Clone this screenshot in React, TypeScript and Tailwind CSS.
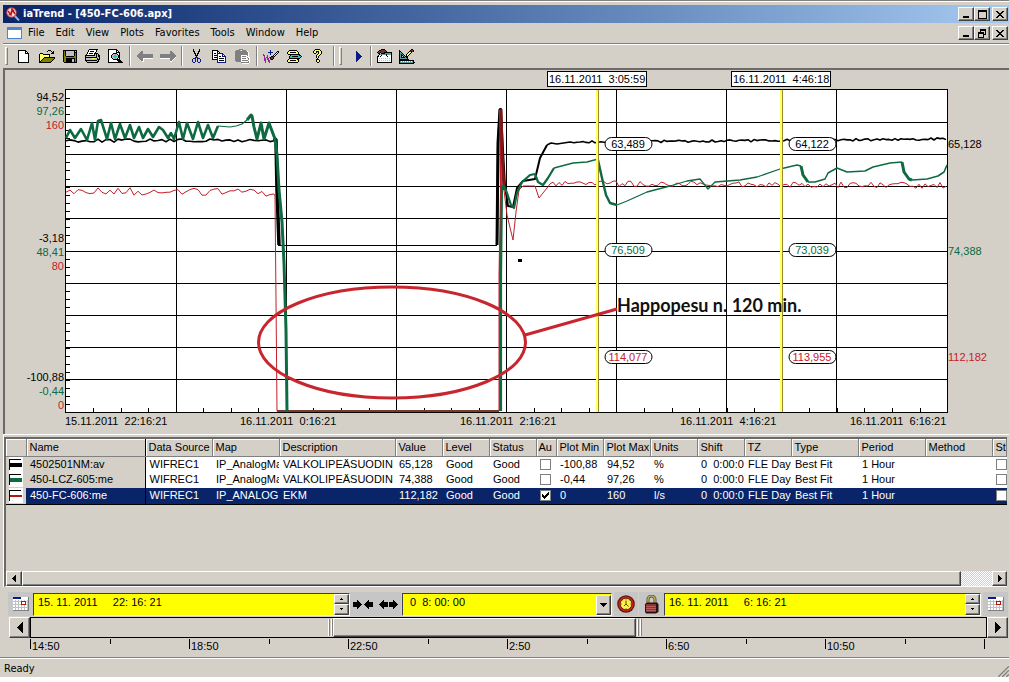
import React from "react";

const UI_FONT = "font-['DejaVu_Sans_Condensed','DejaVu_Sans',sans-serif]";
const RAISED =
  "border border-t-white border-l-white border-r-[#404040] border-b-[#404040] bg-[#d4d0c8] shadow-[inset_-1px_-1px_0_#808080]";

const PALETTE: Record<string, string> = {
  k: "#000000",
  w: "#ffffff",
  g: "#808080",
  l: "#c0c0c0",
  y: "#ffff66",
  o: "#808000",
  b: "#0a1a8c",
  c: "#2bc4c4",
  p: "#a020a0",
  r: "#b01818",
  n: "#0c7c3c",
  d: "#7a3030",
  s: "#5f9ea0",
};

function Pixels({ rows, className = "" }: { rows: string[]; className?: string }) {
  const width = Math.max(...rows.map((r) => r.length));
  const rects: React.ReactElement[] = [];
  rows.forEach((row, y) => {
    let x = 0;
    while (x < row.length) {
      const ch = row[x];
      let end = x + 1;
      while (end < row.length && row[end] === ch) end++;
      if (PALETTE[ch]) {
        rects.push(<rect key={`${x}-${y}`} x={x} y={y} width={end - x} height={1} fill={PALETTE[ch]} />);
      }
      x = end;
    }
  });
  return (
    <svg
      className={`block shrink-0 ${className}`}
      width={width}
      height={rows.length}
      viewBox={`0 0 ${width} ${rows.length}`}
      shapeRendering="crispEdges"
      aria-hidden="true"
    >
      {rects}
    </svg>
  );
}

const ICONS: Record<string, string[]> = {
  New: [
    "kkkkkkkk...",
    "kwwwwwwkk..",
    "kwwwwwwkwk.",
    "kwwwwwwkkkk",
    "kwwwwwwwwwk",
    "kwwwwwwwwwk",
    "kwwwwwwwwwk",
    "kwwwwwwwwwk",
    "kwwwwwwwwwk",
    "kwwwwwwwwwk",
    "kwwwwwwwwwk",
    "kwwwwwwwwwk",
    "kkkkkkkkkkk",
  ],
  Open: [
    ".........kkk....",
    "........k...k.k.",
    ".............kk.",
    ".kkk........kkk.",
    "kywykkkkkkk.....",
    "kwywywywywk.....",
    "kywywywywyk.....",
    "kwywykkkkkkkkkkk",
    "kywykooooooooook",
    "kwykooooooooook.",
    "kykooooooooook..",
    "kkooooooooook...",
    "kkkkkkkkkkkk....",
  ],
  Save: [
    "kkkkkkkkkkkkkk",
    "kokllllllllklk",
    "kokllllllllkkk",
    "kokllllllllkok",
    "kokllllllllkok",
    "kokllllllllkok",
    "kookkkkkkkkook",
    "kooooooooooook",
    "kookkkkkkkkkok",
    "kookkkkkkllkok",
    "kookkkkkkllkok",
    "kookkkkkkllkok",
    ".kkkkkkkkkkkkk",
  ],
  Print: [
    "....kkkkkkkkk..",
    "...kwwwwwwwk...",
    "...kwkkkkwwk...",
    "..kwwwwwwwk....",
    "..kwkkkkwkkkk..",
    ".kwwwwwwwklklk.",
    "kkkkkkkkkklklkk",
    "kllllllllllklkk",
    "kkkkkkkkkkkkllk",
    "kllllllyyyllklk",
    "klllllllllllkkk",
    "kkkkkkkkkkkklk.",
    ".kllllllllllkk.",
    "..kkkkkkkkkkk..",
  ],
  Preview: [
    "kkkkkkkkk......",
    "kwwwwwwwkk.....",
    "kwwwwwwwkwk....",
    "kwwwwwwwkkkk...",
    "kwwwwkkkkwwk...",
    "kwwwkllclkwk...",
    "kwwkllccllkk...",
    "kwwklcccclkk...",
    "kwwkllccllkk...",
    "kwwwkllclkwk...",
    "kwwwwkkkkkkk...",
    "kwwwwwwwwkkkk..",
    "kwwwwwwwwwkkkk.",
    "kkkkkkkkkkkkkkk",
  ],
  Back: [
    "....gg..........",
    "...ggg..........",
    "..gggg..........",
    ".ggggggggggggggg",
    "gggggggggggggggg",
    "gggggggggggggggg",
    ".ggggggggggggggg",
    "..ggggwwwwwwwwww",
    "...gggw.........",
    "....ggw.........",
    ".....ww.........",
  ],
  Forward: [
    "..........gg....",
    "..........ggg...",
    "..........gggg..",
    "ggggggggggggggg.",
    "gggggggggggggggg",
    "gggggggggggggggg",
    "gggggggggggggggw",
    "wwwwwwwwwwggggw.",
    "..........gggw..",
    "..........ggw...",
    "..........ww....",
  ],
  Cut: [
    "..k.....k..",
    "..k.....k..",
    "..kk...kk..",
    "...k...k...",
    "...kk.kk...",
    "....k.k....",
    "....kkk....",
    ".....k.....",
    "....bbb....",
    "..bbb.bbb..",
    ".b..b.b..b.",
    ".b..b.b..b.",
    ".b..b.b..b.",
    "..bb...bb..",
  ],
  Copy: [
    "kkkkkk.........",
    "kwwwwkk........",
    "kwwwwkwk.......",
    "kwkkwbbbbbb....",
    "kwwwwbwwwwbb...",
    "kwkkkbwwwwbwb..",
    "kwwwwbwkkwbbbb.",
    "kwkkkbwwwwwwwb.",
    "kwwwwbwkkkkkwb.",
    "kkkkkbwwwwwwwb.",
    ".....bwkkkkkwb.",
    ".....bwwwwwwwb.",
    ".....bbbbbbbbb.",
  ],
  Paste: [
    "....gggg.......",
    ".gggglwgggg....",
    "ggggggggggggw..",
    "gggggggggggggw.",
    "gggggggggggggw.",
    "gggggggggggggw.",
    "ggggggwwwwwwgw.",
    "ggggggwggggwww.",
    "ggggggwwwwwwgww",
    "ggggggwggggwwgw",
    "ggggggwwwwwwwgw",
    "ggggggwggggggww",
    ".gggggwwwwwwwgw",
    "......ggggggggw",
    ".......wwwwwww.",
  ],
  "Add trace": [
    ".......b.........",
    ".......b......kk.",
    ".....bbbbb...kyk.",
    ".......b....kyk..",
    "p......b...kyk...",
    "pp..p.....kyk....",
    ".p..p...kkdk.....",
    ".p.pp.pkddk......",
    ".pp.pp.kddk......",
    ".pp.pp.pkk.......",
    ".pp..pp..........",
    "..p..pp..........",
    "..p...p..........",
  ],
  "Data source": [
    "..kkkkkkkk.....",
    ".kyyyyyyyyk....",
    "kyykkkkkkyyk...",
    "kyyyyyyyyyyk...",
    ".kkkkkkkkkkkk..",
    "...kcccccccckk.",
    "..kcckkkkkkccck",
    "..kcccccccccck.",
    "..kkkkkkkkkkk..",
    ".kyyyyyyyykk...",
    "kyykkkkkkyyk...",
    "kyyyyyyyyyyk...",
    ".kkkkkkkkkk....",
  ],
  Help: [
    "..kkkkk..",
    ".kyyyyyk.",
    "kyykkkyyk",
    "kyyk.kyyk",
    ".kk..kyyk",
    "....kyyk.",
    "...kyyk..",
    "...kyk...",
    "...kyk...",
    "....k....",
    "...kkk...",
    "...kyyk..",
    "...kyyk..",
    "....kk...",
  ],
  Play: ["b.....", "bb....", "bbb...", "bbbb..", "bbbbb.", "bbbbbb", "bbbbb.", "bbbb..", "bbb...", "bb....", "b....."],
  Properties: [
    ".....kkkk.......",
    "...kkddddk......",
    "..kdddddddk.....",
    ".kddkdddkkkkkkkk",
    "..kk.kkkkssssssk",
    "...ksssssskssssk",
    "..kwwkwwwwkwwwwk",
    ".kkwkwwwwwwkwwwk",
    ".kwwwwwwwwwwwwwk",
    ".kwlwlwlwlwlwlwk",
    ".kwwwwwwwwwwwwwk",
    ".kwlwlwlwlwlwlwk",
    ".kwwwwwwwwwwwwwk",
    ".kkkkkkkkkkkkkkk",
  ],
  Design: [
    "............kk..",
    "k..........kddk.",
    "kk........kdkdk.",
    "ksk......kyyk...",
    "kssk....kyyk....",
    "ksksk..kyyk.....",
    "kskksk.kyk......",
    "ksk.kskkk.......",
    "kskkkkskk.......",
    "ksssssssk.......",
    "kkkkkkkkkk......",
    "kkkkkkkkkkkkkkk.",
    "kswswswswswswsk.",
    "kssssssssssssskk",
    "kkkkkkkkkkkkkkk.",
  ],
};

const CALENDAR = [
  "bbbbbbbbwwwwwwwg",
  "bbbbbbbbwwwwwwwg",
  "wwwwwwwwwwwwwwwg",
  "wwlwwlwwlwwlwwlg",
  "llllllllrrrrrllg",
  "wwlwwlwwrwwwrwlg",
  "wwlwwlwwrwwwrwlg",
  "llllllllrrrrrllg",
  "wwlwwlwwlwwlwwlg",
  "wwlwwlwwlwwlwwlg",
  "lllllllllllllllg",
  "wwlwwlwwlwwlwwlg",
  "wwlwwlwwlwwlwwlg",
  "gggggggggggggggg",
];

const ARROW_R = ["....k....", "....kk...", "kkkkkkk..", "kkkkkkkk.", "kkkkkkkkk", "kkkkkkkk.", "kkkkkkk..", "....kk...", "....k...."];
const ARROW_L = ARROW_R.map((r) => r.split("").reverse().join(""));
const TRI_L = ["...k", "..kk", ".kkk", "kkkk", ".kkk", "..kk", "...k"];
const TRI_R = ["k...", "kk..", "kkk.", "kkkk", "kkk.", "kk..", "k..."];
const BIG_L = [".....k", "....kk", "...kkk", "..kkkk", ".kkkkk", "kkkkkk", ".kkkkk", "..kkkk", "...kkk", "....kk", ".....k"];
const BIG_R = BIG_L.map((r) => r.split("").reverse().join(""));
const TRI_D = ["kkkkkkk", ".kkkkk.", "..kkk..", "...k..."];
const UP_S = [".k.", "kkk"];
const DOWN_S = ["kkk", ".k."];
const MINIMIZE = ["......", "......", "......", "......", "......", "......", "kkkkkk", "kkkkkk"];
const MAXIMIZE = ["kkkkkkkkk", "kkkkkkkkk", "k.......k", "k.......k", "k.......k", "k.......k", "k.......k", "k.......k", "kkkkkkkkk"];
const RESTORE = ["..kkkkkk", "..kkkkkk", "..k....k", "kkkkkk.k", "kkkkkk.k", "k....kkk", "k....k..", "k....k..", "kkkkkk.."];
const CLOSE = ["kk....kk", ".kk..kk.", "..kkkk..", "...kk...", "..kkkk..", ".kk..kk.", "kk....kk"];
const CHECK = ["......k", ".....kk", "k...kkk", "kk.kkk.", "kkkkk..", ".kkk...", "..k...."];

function Sep({ className = "mx-[2px]" }: { className?: string }) {
  return <span className={`h-[20px] w-[2px] border-l border-r border-l-[#808080] border-r-white ${className}`} />;
}

function Grip() {
  return <span className="mx-[2px] h-[18px] w-[3px] border border-t-white border-l-white border-r-[#808080] border-b-[#808080]" />;
}

function Tool({ name }: { name: string }) {
  return (
    <button type="button" aria-label={name} className="flex h-[23px] w-[23px] items-center justify-center">
      <Pixels rows={ICONS[name]} />
    </button>
  );
}

function WindowButtons({ middle }: { middle: "Maximize" | "Restore" }) {
  const base = `flex h-[14px] w-[16px] items-center justify-center ${RAISED}`;
  return (
    <div className="ml-auto flex items-center pr-[1px]">
      <button type="button" aria-label="Minimize" className={base}>
        <Pixels rows={MINIMIZE} />
      </button>
      <button type="button" aria-label={middle} className={base}>
        <Pixels rows={middle === "Maximize" ? MAXIMIZE : RESTORE} />
      </button>
      <button type="button" aria-label="Close" className={`ml-[2px] ${base}`}>
        <Pixels rows={CLOSE} />
      </button>
    </div>
  );
}

/* ---------- Trend chart ---------- */

type Point = [number, number];

function noise(from: number, to: number, base: number, end: number, amp: number, step: number, seed: number): Point[] {
  const pts: Point[] = [];
  let s = seed;
  for (let x = from; x <= to; x += step) {
    s = (s * 1103515245 + 12345) % 2147483648;
    const t = (x - from) / (to - from);
    pts.push([x, Math.round((base + (end - base) * t + (s / 2147483648 - 0.5) * 2 * amp) * 10) / 10]);
  }
  return pts;
}

const path = (pts: Point[]) => pts.map((p) => p.join(",")).join(" ");

const BLACK_LEFT = noise(66, 274, 140.5, 140.5, 1.6, 4, 7);
const BLACK_RIGHT: Point[] = [[547, 145], [551, 143], [557, 144], [570, 142], ...noise(574, 947, 142, 139, 1.2, 3, 21)];
const GREEN_WAVE: Point[] = [
  [66, 138], [70, 130], [75, 138], [81, 129], [87, 140], [92, 123], [95, 140], [98, 121], [101, 120], [107, 139],
  [111, 123], [115, 139], [120, 124], [125, 138], [130, 125], [134, 138], [139, 127], [143, 138], [148, 129],
  [153, 137], [159, 127], [163, 130], [168, 138], [171, 133], [174, 139], [179, 122], [183, 139], [187, 123],
  [193, 139], [198, 122], [203, 138], [208, 125], [213, 138], [218, 126],
];
const GREEN_THIN: Point[] = [[218, 126], [230, 127], [236, 126], [242, 124], [247, 120]];
const GREEN_FALL: Point[] = [
  [247, 120], [251, 115], [252, 116], [254, 127], [257, 139], [261, 123], [264, 139], [269, 123], [275, 139],
  [277, 155], [279, 190], [282, 222], [284, 263], [286, 330], [287, 411],
];
const RED_LEFT = noise(66, 272, 191, 193, 4, 4, 11);
const RED_RIGHT = noise(550, 947, 183.5, 185.5, 3, 3, 5);

function Pill({ x, y, color, children }: { x: number; y: number; color: string; children: string }) {
  return (
    <g>
      <rect x={x} y={y - 6.5} width={47} height={13} rx={6.5} fill="#fff" stroke="#000" />
      <text x={x + 23} y={y + 4} fill={color} textAnchor="middle">
        {children}
      </text>
    </g>
  );
}

const GREEN = "#0d6a41";
const RED = "#c4202a";
const AXIS: [number, string, string][] = [
  [101, "94,52", "#000"], [115, "97,26", GREEN], [129, "160", RED],
  [242, "-3,18", "#000"], [256, "48,41", GREEN], [270, "80", RED],
  [381, "-100,88", "#000"], [395, "-0,44", GREEN], [409, "0", RED],
];

function TrendChart() {
  const hs = [122, 154, 186, 218, 251, 283, 315, 347, 379];
  const vs = [176, 286, 396, 506, 616, 726, 836];
  return (
    <svg viewBox="6 70 1003 364" className="block h-auto w-full font-['Liberation_Sans',Arial,sans-serif] text-[11px]" role="img" aria-label="Trend chart">
      <rect x="65" y="89" width="882" height="323" fill="#fff" />
      <g stroke="#000" shapeRendering="crispEdges">
        {hs.map((y) => <line key={y} x1={65} x2={947} y1={y + 0.5} y2={y + 0.5} />)}
        {vs.map((x) => <line key={x} x1={x + 0.5} x2={x + 0.5} y1={89} y2={412} />)}
        {Array.from({ length: 39 }, (_, i) => 98 + Math.round(i * 8.05)).map((y) => (
          <line key={y} x1={65} x2={70} y1={y + 0.5} y2={y + 0.5} />
        ))}
        {Array.from({ length: 31 }, (_, i) => 93 + Math.round(i * 27.55)).map((x) => (
          <line key={x} x1={x + 0.5} x2={x + 0.5} y1={408} y2={412} />
        ))}
        <rect x="65.5" y="89.5" width="882" height="323" fill="none" />
      </g>

      <g fill="none" stroke="#000" strokeLinejoin="round">
        <polyline points={path(BLACK_LEFT)} strokeWidth="1.6" />
        <polyline points="274,138 276,140 277,190 279,245" strokeWidth="3.5" />
        <polyline points="278,245.5 497,245.5" />
        <polyline points="497,245 498,143 500,109 501,109 503,150 505,186 508,206 513,207 517,188 523,181 535,179 540,158 547,145" strokeWidth="2" />
        <polyline points="497,245 498,143 500,109" strokeWidth="3" />
        <polyline points={path(BLACK_RIGHT)} strokeWidth="1.6" />
      </g>
      <g fill="none" stroke={RED} strokeWidth="1">
        <polyline points={path([...RED_LEFT, [274, 194], [275, 196], [276, 300], [277, 411]])} />
        <polyline points="499.5,411 499.5,275 501,190 500,110" strokeWidth="2" />
        <polyline points="501,109 502,150 504,190" stroke="#801818" strokeWidth="3" />
        <polyline points={path([[504, 190], [507, 215], [513, 240], [516, 212], [519, 190], [523, 186], [535, 186], [539, 198], [547, 188], ...RED_RIGHT])} />
        <polyline points="277,411 499,411" stroke="#7a3a2c" strokeWidth="2" />
      </g>
      <g fill="none" stroke={GREEN} strokeLinejoin="round">
        <polyline points={path(GREEN_WAVE)} strokeWidth="2.6" />
        <polyline points={path(GREEN_THIN)} strokeWidth="1.2" />
        <polyline points={path(GREEN_FALL)} strokeWidth="3" />
        <polyline points="501,411 501,275 502,186 504,186 507,193 511,205 514,208 517,193 522,182 530,175 535,174" strokeWidth="2.2" />
        <polyline points="535,174 538,182 543,185 548,178 554,168" strokeWidth="2.2" />
        <polyline points="554,168 573,163 587,162 598,159" strokeWidth="1.3" />
        <polyline points="598,160 602,178 606,195 610,203 617,205" strokeWidth="2.4" />
        <polyline points="617,205 627,201 647,192 670,186 687,181 700,179 708,189 715,182 740,180 757,177 780,169 797,165 801,166" strokeWidth="1.3" />
        <polyline points="801,166 803,175 808,182" strokeWidth="3" />
        <polyline points="808,182 815,182 825,179 828,173 837,168 847,172 865,171 873,167 890,163 902,162" strokeWidth="1.5" />
        <polyline points="902,162 904,172 909,179 912,180" strokeWidth="3" />
        <polyline points="912,180 927,179 938,176 944,172 947,165" strokeWidth="1.6" />
      </g>
      <rect x="518" y="259" width="4" height="3" />

      {[596, 780].map((x) => (
        <g key={x} shapeRendering="crispEdges">
          <rect x={x} y="90" width="2" height="322" fill="#ffff66" />
          <rect x={x + 2} y="90" width="1" height="322" fill="#9a8a30" />
        </g>
      ))}
      <g fill="#fff" stroke="#000" shapeRendering="crispEdges">
        <rect x="547.5" y="71.5" width="99" height="15" />
        <rect x="731.5" y="71.5" width="99" height="15" />
      </g>
      <g className="whitespace-pre">
        <text x="549" y="83">16.11.2011{"\u00a0\u00a0"}3:05:59</text>
        <text x="733" y="83">16.11.2011{"\u00a0\u00a0"}4:46:18</text>
        <text x="65" y="425">15.11.2011{"\u00a0\u00a0"}22:16:21</text>
        <text x="240" y="425">16.11.2011{"\u00a0\u00a0"}0:16:21</text>
        <text x="460" y="425">16.11.2011{"\u00a0\u00a0"}2:16:21</text>
        <text x="680" y="425">16.11.2011{"\u00a0\u00a0"}4:16:21</text>
        <text x="850" y="425">16.11.2011{"\u00a0\u00a0"}6:16:21</text>
      </g>
      {AXIS.map(([y, label, color]) => (
        <text key={y} x={64} y={y} fill={color} textAnchor="end">{label}</text>
      ))}
      <text x="948" y="148">65,128</text>
      <text x="948" y="255" fill={GREEN}>74,388</text>
      <text x="948" y="361" fill={RED}>112,182</text>

      <Pill x={605} y={144} color="#000">63,489</Pill>
      <Pill x={605} y={250} color={GREEN}>76,509</Pill>
      <Pill x={605} y={357} color={RED}>114,077</Pill>
      <Pill x={789} y={144} color="#000">64,122</Pill>
      <Pill x={789} y={250} color={GREEN}>73,039</Pill>
      <Pill x={789} y={357} color={RED}>113,955</Pill>

      <ellipse cx="392" cy="342.5" rx="133.5" ry="55.5" fill="none" stroke="#c8262e" strokeWidth="3" />
      <line x1="525" y1="335" x2="617" y2="309" stroke="#c8262e" strokeWidth="3" />
      <text x="617" y="312" className="font-['Lato','Open_Sans',sans-serif] text-[18px] font-bold" fill="#111">
        Happopesu n. 120 min.
      </text>
    </svg>
  );
}

/* ---------- Trace table ---------- */

const COLUMNS: [string, string][] = [
  ["", "w-[20px]"],
  ["Name", "w-[119px]"],
  ["Data Source", "w-[67px]"],
  ["Map", "w-[67px]"],
  ["Description", "w-[116px]"],
  ["Value", "w-[47px]"],
  ["Level", "w-[47px]"],
  ["Status", "w-[47px]"],
  ["Au", "w-[20px]"],
  ["Plot Min", "w-[47px]"],
  ["Plot Max", "w-[47px]"],
  ["Units", "w-[47px]"],
  ["Shift", "w-[47px]"],
  ["TZ", "w-[47px]"],
  ["Type", "w-[67px]"],
  ["Period", "w-[67px]"],
  ["Method", "w-[67px]"],
  ["St", ""],
];

const TRACES = [
  { color: "#000000", thick: 4, name: "4502501NM:av", map: "IP_AnalogMap", desc: "VALKOLIPEÄSUODIN", value: "65,128", auto: false, min: "-100,88", max: "94,52", units: "%" },
  { color: GREEN, thick: 4, name: "450-LCZ-605:me", map: "IP_AnalogMap", desc: "VALKOLIPEÄSUODIN", value: "74,388", auto: false, min: "-0,44", max: "97,26", units: "%" },
  { color: "#b01818", thick: 2, name: "450-FC-606:me", map: "IP_ANALOG", desc: "EKM", value: "112,182", auto: true, min: "0", max: "160", units: "l/s" },
];

function GridCheck({ label, checked = false }: { label: string; checked?: boolean }) {
  return (
    <span className="relative block h-[11px] w-[11px]">
      <input
        type="checkbox"
        aria-label={label}
        defaultChecked={checked}
        className="block h-[11px] w-[11px] appearance-none border border-[#808080] bg-white"
      />
      {checked && <Pixels rows={CHECK} className="pointer-events-none absolute top-[2px] left-[2px]" />}
    </span>
  );
}

function TraceTable() {
  return (
    <table className="w-full table-fixed border-collapse text-left text-[11px] leading-[15px] whitespace-nowrap">
      <colgroup>
        {COLUMNS.map(([name, width], i) => (
          <col key={name + i} className={width} />
        ))}
      </colgroup>
      <thead>
        <tr className="h-[17px]">
          {COLUMNS.map(([name], i) => (
            <th
              key={name + i}
              scope="col"
              className={`overflow-hidden border-r border-b border-b-[#808080] bg-[#d4d0c8] p-0 pt-px font-normal shadow-[inset_1px_1px_0_#fff] ${
                i === 1 ? "border-r-black" : "border-r-[#808080]"
              } ${i === 8 ? "pl-[2px]" : "pl-[3px]"}`}
            >
              {name}
            </th>
          ))}
        </tr>
      </thead>
      <tbody>
        {TRACES.map((t) => {
          const selected = t.auto;
          const cell = "overflow-hidden p-0 pl-[4px] align-top";
          return (
            <tr key={t.name} className={`h-[16px] ${selected ? "bg-[#0a246a] text-white" : "bg-white text-black"}`}>
              <td className="bg-[#d4d0c8] p-0 pl-[3px] align-top">
                <svg width="14" height="15" viewBox="0 0 14 15" className="block" shapeRendering="crispEdges" aria-hidden="true">
                  <rect width="14" height="15" fill="#fff" />
                  <path d="M0 2h12v1H1v10H0z" fill="#000" />
                  <rect x="1" y={t.thick === 4 ? 6 : 7} width="12" height={t.thick} fill={t.color} />
                </svg>
              </td>
              <td className={`${cell} border-r border-r-black ${selected ? "" : "bg-[#d4d0c8]"}`}>{t.name}</td>
              <td className={cell}>WIFREC1</td>
              <td className={cell}>{t.map}</td>
              <td className={cell}>{t.desc}</td>
              <td className={cell}>{t.value}</td>
              <td className={cell}>Good</td>
              <td className={cell}>Good</td>
              <td className={`${cell} pt-[2px]`}><GridCheck label={`Autoscale ${t.name}`} checked={t.auto} /></td>
              <td className={cell}>{t.min}</td>
              <td className={cell}>{t.max}</td>
              <td className={cell}>{t.units}</td>
              <td className={cell}>0{"\u00a0\u00a0"}0:00:00</td>
              <td className={cell}>FLE Day</td>
              <td className={cell}>Best Fit</td>
              <td className={cell}>1 Hour</td>
              <td className={cell} />
              <td className={`${cell} pt-[2px]`}><GridCheck label={`Stepped ${t.name}`} /></td>
            </tr>
          );
        })}
      </tbody>
    </table>
  );
}

/* ---------- Time controls ---------- */

const FIELD = "border border-t-[#404040] border-l-[#404040] border-r-white border-b-white bg-[#ffff00]";

function TimeField({ label, value }: { label: string; value: string }) {
  return (
    <div className={`flex h-[23px] min-w-0 flex-1 ${FIELD}`}>
      <input
        aria-label={label}
        defaultValue={value}
        className="min-w-0 flex-1 bg-transparent px-[4px] pb-[4px] text-[11px] leading-[16px] outline-none"
      />
      <div className="flex w-[15px] flex-col bg-[#d4d0c8]">
        <button type="button" aria-label={`${label} up`} className={`flex flex-1 items-center justify-center ${RAISED}`}>
          <Pixels rows={UP_S} />
        </button>
        <button type="button" aria-label={`${label} down`} className={`flex flex-1 items-center justify-center ${RAISED}`}>
          <Pixels rows={DOWN_S} />
        </button>
      </div>
    </div>
  );
}

const FLAT = "flex h-[24px] shrink-0 items-center justify-center bg-[#c6c6c6]";

function TimeControls() {
  return (
    <div className="flex items-center pr-[1px] pl-[8px]">
      <button type="button" aria-label="Start calendar" className={`${FLAT} w-[25px]`}>
        <Pixels rows={CALENDAR} />
      </button>
      <TimeField label="Start time" value="15. 11. 2011     22: 16: 21" />
      <button type="button" aria-label="Shrink range" className={`${FLAT} w-[26px] gap-[2px]`}>
        <Pixels rows={ARROW_R} />
        <Pixels rows={ARROW_L} />
      </button>
      <button type="button" aria-label="Expand range" className={`${FLAT} mr-[1px] w-[25px] gap-[1px]`}>
        <Pixels rows={ARROW_L} />
        <Pixels rows={ARROW_R} />
      </button>
      <div className={`relative h-[23px] w-[210px] shrink-0 ${FIELD}`}>
        <select
          aria-label="Time span"
          className="block h-full w-full appearance-none bg-transparent pb-[4px] pl-[7px] text-[11px] leading-[16px] outline-none"
        >
          <option>0{"\u00a0\u00a0"}8: 00: 00</option>
        </select>
        <span className={`pointer-events-none absolute top-[1px] right-0 flex h-[20px] w-[15px] items-center justify-center ${RAISED}`}>
          <Pixels rows={TRI_D} />
        </span>
      </div>
      <button type="button" aria-label="Now" className={`${FLAT} ml-[2px] w-[24px]`}>
        <svg width="18" height="18" viewBox="0 0 18 18" aria-hidden="true">
          <circle cx="9" cy="9" r="8.8" fill="#6b1010" />
          <circle cx="9" cy="9" r="7.6" fill="#c02a1a" />
          <circle cx="9" cy="9" r="5.8" fill="#fff04a" stroke="#5a1010" strokeWidth="0.8" />
          <path d="M9 5.500v3.500M9 9l2.500 2.500M9 9l-2 2" stroke="#4a3a00" strokeWidth="0.900" fill="none" />
          <path d="M9 4v1M9 13v1M4 9h1M13 9h1M5.500 5.500l.7.7M12.500 5.500l-.7.7" stroke="#7a6a00" strokeWidth="0.800" />
        </svg>
      </button>
      <button type="button" aria-label="Lock" className={`${FLAT} ml-[1px] w-[25px]`}>
        <svg width="15" height="19" viewBox="0 0 15 19" aria-hidden="true">
          <path d="M4 9V4.500a3.500 3.500 0 0 1 7 0V9" fill="none" stroke="#5a5a20" strokeWidth="3" />
          <path d="M4 9V4.500a3.500 3.500 0 0 1 7 0V9" fill="none" stroke="#c0b870" strokeWidth="1.200" />
          <path d="M1 9l2-1.500h10L14.500 9v8L12 18.500H2L1 17z" fill="#2a1010" />
          <path d="M2 9h10v8H2z" fill="#8a3434" />
          <path d="M2 11.500h10M2 13.500h10M2 15.500h10" stroke="#c87070" strokeWidth="0.700" />
        </svg>
      </button>
      <TimeField label="End time" value="16. 11. 2011     6: 16: 21" />
      <button type="button" aria-label="End calendar" className={`${FLAT} ml-[2px] w-[25px]`}>
        <Pixels rows={CALENDAR} />
      </button>
    </div>
  );
}

function Handle() {
  return (
    <span className="flex w-[6px] shrink-0 justify-center gap-[1px] bg-[#d4d0c8] py-[1px]">
      <span className="w-[2px] border-l border-white bg-[#808080]" />
      <span className="w-[2px] border-l border-white bg-[#808080]" />
    </span>
  );
}

const RULER = ["14:50", "", "18:50", "", "22:50", "", "2:50", "", "6:50", "", "10:50", ""];

export default function App() {
  return (
    <div className="bg-white">
      <div className="border-t border-[#808080] bg-[#d4d0c8] font-['Liberation_Sans',Arial,sans-serif] text-[11px] text-black">
        <div className="h-[4px] border-t border-white" />
        <div className="pl-[3px]">
          <header className={`flex h-[18px] items-center bg-gradient-to-r from-[#0a246a] to-[#a6caf0] pl-[3px] ${UI_FONT}`}>
            <svg width="14" height="14" viewBox="0 0 14 14" aria-hidden="true">
              <path d="M8 8l5 5.500" stroke="#8ab4e8" strokeWidth="2" />
              <circle cx="5.500" cy="5.500" r="4.800" fill="#f4dcdc" stroke="#c03030" strokeWidth="1" />
              <path d="M2 4l3 4 1-6 3 5M3 8l5-5" stroke="#c01818" strokeWidth="1.500" fill="none" />
            </svg>
            <h1 className="pl-[3px] text-[11px] leading-[16px] font-bold text-white">iaTrend - [450-FC-606.apx]</h1>
            <WindowButtons middle="Maximize" />
          </header>

          <nav className={`flex h-[20px] items-center pl-[4px] ${UI_FONT}`}>
            <svg width="15" height="12" viewBox="0 0 15 12" shapeRendering="crispEdges" aria-hidden="true">
              <rect width="15" height="12" fill="#4a86c8" />
              <rect x="1" y="3" width="13" height="8" fill="#fff" />
            </svg>
            {["File", "Edit", "View", "Plots", "Favorites", "Tools", "Window", "Help"].map((item) => (
              <button key={item} type="button" className="pr-[5px] pl-[6px] text-[11px] leading-[16px]">
                {item}
              </button>
            ))}
            <WindowButtons middle="Restore" />
          </nav>

          <div className="flex h-[25px] items-center border-t border-[#808080] shadow-[inset_0_1px_0_#fff]">
            <Grip />
            <div className="flex items-center pl-[2px]">
              {["New", "Open", "Save", "Print", "Preview"].map((n) => <Tool key={n} name={n} />)}
              <Sep />
              <Tool name="Back" />
              <Tool name="Forward" />
              <Sep />
              {["Cut", "Copy", "Paste"].map((n) => <Tool key={n} name={n} />)}
              <Sep />
              {["Add trace", "Data source", "Help"].map((n) => <Tool key={n} name={n} />)}
              <Sep className="ml-[4px] mr-[2px]" />
              <Grip />
              <span className="w-[3px]" />
              <Tool name="Play" />
              <Sep className="mx-0" />
              <Tool name="Properties" />
              <Tool name="Design" />
            </div>
          </div>
        </div>

        <main className="pl-[3px]">
          <section className="border-t-2 border-l-2 border-[#6a6a6a] pl-[1px]">
            <TrendChart />
          </section>

          <section className="border-t border-l border-white pt-[2px] pr-[2px]">
            <div className="border-t-2 border-l-2 border-[#6a6a6a] border-b border-b-white">
              <TraceTable />
              <div className="h-[67px] border-t border-black" />
              <div className="flex h-[15px] items-stretch">
                <button type="button" aria-label="Scroll left" className={`flex w-[16px] items-center justify-center ${RAISED}`}>
                  <Pixels rows={TRI_L} />
                </button>
                <div className="flex flex-1 bg-[repeating-conic-gradient(#fff_0_25%,#d4d0c8_0_50%)] bg-[length:2px_2px]">
                  <div className={`mr-[31px] flex-1 ${RAISED}`} />
                </div>
                <button type="button" aria-label="Scroll right" className={`flex w-[15px] items-center justify-center ${RAISED}`}>
                  <Pixels rows={TRI_R} />
                </button>
              </div>
            </div>
          </section>
        </main>

        <section className="pt-[5px]">
          <TimeControls />
          <div className="mt-[1px] flex h-[21px] pr-[1px] pl-[9px]">
            <button type="button" aria-label="Earlier" className={`flex w-[21px] items-center justify-center ${RAISED}`}>
              <Pixels rows={BIG_L} />
            </button>
            <div className="flex min-w-0 flex-1 border border-black">
              <div className="w-[31%]" />
              <Handle />
              <div className={`min-w-0 flex-1 ${RAISED}`} />
              <Handle />
              <div className="w-[36%]" />
            </div>
            <button type="button" aria-label="Later" className={`flex w-[21px] items-center justify-center ${RAISED}`}>
              <Pixels rows={BIG_R} />
            </button>
          </div>
          <div className="flex h-[19px] items-start pt-px pr-[24px] pl-[30px]">
            {RULER.map((label, i) => (
              <div key={i} className="flex min-w-0 flex-1 items-start">
                <span className={`w-px bg-black ${label ? "h-[10px]" : "h-[5px]"}`} />
                <span className="pl-[1px] leading-[14px]">{label}</span>
              </div>
            ))}
            <span className="h-[10px] w-px bg-black" />
          </div>
        </section>

        <footer className={`flex h-[20px] items-center border-t border-[#808080] pl-[4px] shadow-[inset_0_1px_0_#fff] ${UI_FONT}`}>
          <span className="pt-[3px] leading-[16px]">Ready</span>
          <svg width="13" height="13" viewBox="0 0 13 13" className="ml-auto self-end" aria-hidden="true">
            <path d="M1 13L13 1M5 13l8-8M9 13l4-4" stroke="#fff" strokeWidth="1" />
            <path d="M2 13L13 2M6 13l7-7M10 13l3-3" stroke="#808080" strokeWidth="1.500" />
          </svg>
        </footer>
      </div>
    </div>
  );
}
